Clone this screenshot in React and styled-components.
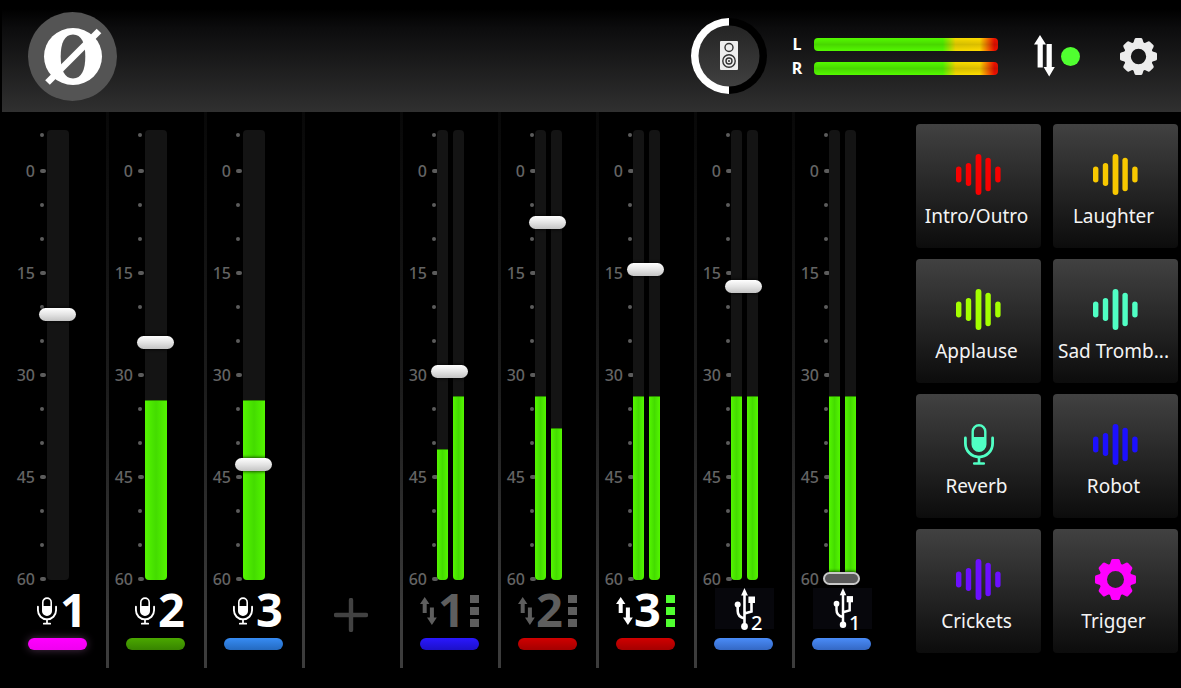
import React from "react";
import styled, { createGlobalStyle } from "styled-components";

const GlobalStyle = createGlobalStyle`
    * {
        box-sizing: border-box;
    }
    body {
        margin: 0;
        background: #000;
        color: #fff;
        font-family: "Noto Sans", "Open Sans", sans-serif;
    }
    button {
        font: inherit;
        color: inherit;
        border: 0;
        padding: 0;
        background: none;
        cursor: pointer;
    }
    svg {
        display: block;
    }
`

const Header = styled.header`
    display: flex;
    align-items: center;
    height: 112px;
    margin-left: 2px;
    padding: 0 24px 0 26px;
    background: linear-gradient(#000 8%, #0c0c0d 25%, #303030);
`

const Logo = styled.button`
    margin-right: auto;
`

const Output = styled.button`
    margin-right: 24px;
`

const Levels = styled.div`
    display: grid;
    grid-template-columns: 12px 184px;
    column-gap: 11px;
    row-gap: 11px;
    align-items: center;
    margin-right: 36px;
`

const LevelName = styled.span`
    font-size: 16px;
    font-weight: 700;
    line-height: 13px;
    text-align: center;
`

const Level = styled.div`
    height: 13px;
    border-radius: 4px;
    background:
        linear-gradient(transparent, rgba(0, 0, 0, 0.14) 50%, transparent),
        linear-gradient(90deg, #54fa00 70%, #f5dc00 77%, #ffdc00 90%, #f01000 98%);
`

const Status = styled.div`
    display: flex;
    align-items: center;
    gap: 6px;
    margin-right: 40px;
`

const Led = styled.span`
    width: 19px;
    height: 19px;
    border-radius: 50%;
    background: #50ff30;
`

const SettingsButton = styled.button`
    color: #ececec;
`

const Main = styled.main`
    display: flex;
    align-items: flex-start;
    gap: 22px;
    padding: 0 3px 0 12px;
`

const Mixer = styled.section`
    flex: 1;
    display: grid;
    grid-template-columns: repeat(9, minmax(0, 1fr));
`

const Channel = styled.div`
    padding: 4px 0 18px;
    background: ${({ $last }) => $last ? "none" : "linear-gradient(#080808, #1c1c1c 50%, #3c3c3c 92%) right 1px top / 3px 100% no-repeat"};
`

const FaderArea = styled.div`
    display: flex;
    height: 472px;
`

const Scale = styled.div`
    width: ${({ $stereo }) => $stereo ? "33px" : "35px"};
    color: #646464;
`

const Tick = styled.div`
    display: flex;
    align-items: center;
    justify-content: flex-end;
    gap: 5px;
    width: 34px;
    height: ${({ $first }) => $first ? "38px" : "34px"};
    font-size: 16px;
    font-weight: 500;
    line-height: 20px;
`

const Mark = styled.span`
    width: 6px;

    &::before {
        content: "";
        display: block;
        width: ${({ $major }) => $major ? "6px" : "4px"};
        height: 4px;
        border-radius: 2px;
        background: #5c5c5c;
    }
`

const Tracks = styled.div`
    position: relative;
    display: flex;
    gap: 5px;
    height: 450px;
    margin-top: 14px;
`

const Track = styled.div`
    display: flex;
    align-items: flex-end;
    width: ${({ $stereo }) => $stereo ? "11px" : "22px"};
    border-radius: 4px;
    background: #141414;
    overflow: hidden;
`

const Fill = styled.div`
    width: 100%;
    border-top: 1px solid #2c8a00;
    background: linear-gradient(90deg, #54f600, #44dc00 50%, #54f600);
`

const Fader = styled.input`
    position: absolute;
    top: -6px;
    left: ${({ $stereo }) => $stereo ? "-6px" : "-8px"};
    width: 37px;
    height: 461px;
    margin: 0;
    appearance: none;
    background: transparent;
    writing-mode: vertical-lr;
    direction: rtl;

    &::-webkit-slider-thumb {
        appearance: none;
        width: 37px;
        height: 13px;
        border-radius: 7px;
        border: ${({ $muted }) => $muted ? "2px solid #c8c8c8" : "0"};
        background: ${({ $muted }) => $muted ? "#5a5a5a" : "linear-gradient(#fff, #e4e4e4 50%, #c4c4c4)"};
        box-shadow: 0 0 3px 1px rgba(0, 0, 0, 0.6);
    }
`

const Source = styled.div`
    display: flex;
    align-items: center;
    justify-content: ${({ $spread }) => $spread ? "space-between" : "flex-end"};
    gap: ${({ $spread }) => $spread ? "0" : "3px"};
    width: 59px;
    height: 46px;
    margin-left: 16px;
    color: ${({ $off }) => $off ? "#5e5e5e" : "#fff"};
`

const Number = styled.span`
    padding-bottom: 5px;
    font-size: 47px;
    font-weight: 700;
    line-height: 40px;
`

const Slots = styled.span`
    display: grid;
    gap: 4px;
    margin-left: 4px;
    color: ${({ $color }) => $color};

    i {
        width: 9px;
        height: 8px;
        background: currentColor;
    }
`

const Usb = styled.div`
    position: relative;
    display: flex;
    justify-content: center;
    width: 59px;
    height: 46px;
    margin-left: 17px;
    background: linear-gradient(#07070c 41px, transparent 41px);
`

const UsbNumber = styled.span`
    position: absolute;
    left: 36px;
    top: 25px;
    font-size: 20px;
    font-weight: 500;
    line-height: 20px;
`

const Strip = styled.div`
    width: 59px;
    height: 12px;
    margin: 4px 0 0 16px;
    border-radius: 6px;
    background: linear-gradient(${({ $from, $to }) => `${$from}, ${$to}`});
    box-shadow: ${({ $glow }) => $glow ? "0 0 8px rgba(255, 160, 255, 0.3)" : "none"};
`

const AddButton = styled.button`
    display: block;
    margin: 482px auto 0 28px;
`

const Pads = styled.section`
    display: grid;
    grid-template-columns: 125px 125px;
    gap: 11px 12px;
    padding-top: 12px;
`

const Pad = styled.button`
    display: flex;
    flex-direction: column;
    align-items: center;
    gap: 9px;
    height: 124px;
    padding-top: 30px;
    border-radius: 4px;
    background: linear-gradient(#414141, #0c0c0c);
`

const PadLabel = styled.span`
    padding-right: 4px;
    color: #f4f4f4;
    font-size: 19px;
    line-height: 24px;
    white-space: nowrap;
`

const PadIcon = styled.span`
    color: ${({ $color }) => $color};
`

const LogoIcon = () => (
    <svg width="89" height="89" viewBox="0 0 89 89">
        <circle cx="44.5" cy="44.5" r="44.5" fill="#545454" />
        <ellipse cx="45" cy="44.5" rx="29" ry="28.5" fill="#fff" />
        <path d="M45 22.5C53.5 22.5 57.3 31 57.3 44.5S53.5 66.5 45 66.5 32.7 58 32.7 44.5 36.5 22.5 45 22.5z" fill="#545454" />
        <path d="M19.5 70.5 71 19" stroke="#fff" strokeWidth="6.6" />
    </svg>
)

const SpeakerDial = () => (
    <svg width="76" height="76" viewBox="0 0 76 76">
        <defs>
            <linearGradient id="dial" x1="0" y1="0" x2="0" y2="1">
                <stop offset="0" stopColor="#242424" />
                <stop offset="1" stopColor="#404040" />
            </linearGradient>
        </defs>
        <circle cx="38" cy="38" r="38" fill="#000" />
        <path d="M38 0a38 38 0 0 0 0 76z" fill="#fff" />
        <circle cx="38" cy="38" r="30.5" fill="url(#dial)" />
        <rect x="29" y="23" width="18" height="29" rx="1" fill="#eee" />
        <g fill="none" stroke="#333">
            <circle cx="38" cy="29.5" r="4" strokeWidth="1.4" />
            <circle cx="38" cy="43" r="6.2" strokeWidth="1.4" />
            <circle cx="38" cy="43" r="3" strokeWidth="1.4" />
        </g>
        <circle cx="38" cy="43" r="1" fill="#333" />
    </svg>
)

const TransferIcon = () => (
    <svg width="21" height="42" viewBox="0 0 21 42" fill="#fff">
        <path d="M6 0 12 9.5H8.8V32.5H3.6V9.5H0z" />
        <path d="M12.6 9H17.8V32H20.8L15.2 41.5 9.6 32H12.6z" />
    </svg>
)

const GearIcon = ({ size }) => (
    <svg width={size} height={size} viewBox="0 0 40 40" fill="currentColor">
        <circle cx="20" cy="20" r="12.1" fill="none" stroke="currentColor" strokeWidth="7.6" />
        {[0, 45, 90, 135, 180, 225, 270, 315].map(angle => (
            <path
                key={angle}
                d="M12.5 8.5 14.6 4.8 15.8 1.2Q16.2 0 17.4 0H22.6Q23.8 0 24.2 1.2L25.4 4.8 27.5 8.5z"
                transform={`rotate(${angle} 20 20)`}
            />
        ))}
    </svg>
)

const MicIcon = ({ width = 30, height = 41 }) => (
    <svg width={width} height={height} viewBox="0 0 30 41" fill="none" stroke="currentColor">
        <rect x="8.7" y="1.2" width="12.6" height="25.6" rx="6.3" strokeWidth="2.4" />
        <path d="M8.5 13H21.5V20.5A6.5 6.5 0 0 1 8.5 20.5z" fill="currentColor" stroke="none" />
        <path d="M1.4 14V19.5A13.6 13.6 0 0 0 28.6 19.5V14" strokeWidth="2.8" strokeLinecap="round" />
        <path d="M15 33V39M10.2 39.5H19.8" strokeWidth="2.6" strokeLinecap="round" />
    </svg>
)

const WaveIcon = () => (
    <svg width="45" height="41" viewBox="0 0 45 41" fill="currentColor">
        <rect x="0" y="12.5" width="5.4" height="16" rx="2.7" />
        <rect x="9.8" y="9" width="5.4" height="23" rx="2.7" />
        <rect x="19.6" y="0" width="5.8" height="41" rx="2.9" />
        <rect x="29.4" y="3.7" width="5.4" height="33.6" rx="2.7" />
        <rect x="39.2" y="12.5" width="5.4" height="16" rx="2.7" />
    </svg>
)

const SwapIcon = () => (
    <svg width="17" height="28" viewBox="0 0 17 28" fill="currentColor">
        <path d="M4.7 0 9.4 7H6.7V16H2.7V7H0z" />
        <path d="M9.9 10.5H13.9V20.5H16.8L11.9 28 7 20.5H9.9z" />
    </svg>
)

const UsbIcon = ({ size }) => (
    <svg width={size / 2} height={size} viewBox="0 0 21 42" fill="none" stroke="#fff" strokeWidth="2.6">
        <path d="M10.5 6V38M10.5 30.5C6 29.5 3.7 27.5 3.7 23V17M10.5 25.5 17.5 23.5V14" />
        <path d="M10.5 0 13.9 7.5H7.1z" fill="#fff" stroke="none" />
        <circle cx="3.7" cy="16.5" r="3" fill="#fff" stroke="none" />
        <path d="M14.4 8.5H21V15H14.4z" fill="#fff" stroke="none" />
        <circle cx="10.5" cy="38.5" r="3.4" fill="#fff" stroke="none" />
    </svg>
)

const PlusIcon = () => (
    <svg width="34" height="34" viewBox="0 0 34 34">
        <path d="M17 2V32M2 17H32" stroke="#424242" strokeWidth="4.4" strokeLinecap="round" />
    </svg>
)

// levels are fill heights in px, gain is in dB
const channels = [
    { id: "mic1", type: "mic", number: 1, gain: -21.1, levels: [0], from: "#ff00ff", to: "#f000f0", glow: true },
    { id: "mic2", type: "mic", number: 2, gain: -25.2, levels: [180], from: "#4ba800", to: "#378400" },
    { id: "mic3", type: "mic", number: 3, gain: -43.2, levels: [180], from: "#378cf4", to: "#246ac0" },
    { id: "add", type: "add" },
    { id: "call1", type: "call", number: 1, gain: -29.5, levels: [131, 184], off: true, from: "#2a18ff", to: "#1c10c8" },
    { id: "call2", type: "call", number: 2, gain: -7.6, levels: [184, 152], off: true, from: "#d00000", to: "#a40000" },
    { id: "call3", type: "call", number: 3, gain: -14.5, levels: [184, 184], from: "#d00000", to: "#a40000" },
    { id: "usb2", type: "usb", number: 2, iconSize: 42, gain: -17, levels: [184, 184], from: "#4a8cf8", to: "#3468c4" },
    { id: "usb1", type: "usb", number: 1, iconSize: 40, gain: -60, levels: [184, 184], muted: true, from: "#4a8cf8", to: "#3468c4" },
]

const ticks = ["", "0", "", "", "15", "", "", "30", "", "", "45", "", "", "60"]

const pads = [
    { label: "Intro/Outro", color: "#f80000", icon: <WaveIcon /> },
    { label: "Laughter", color: "#f8c800", icon: <WaveIcon /> },
    { label: "Applause", color: "#a4ff00", icon: <WaveIcon /> },
    { label: "Sad Tromb...", color: "#50ffc4", icon: <WaveIcon /> },
    { label: "Reverb", color: "#50ffc4", icon: <MicIcon /> },
    { label: "Robot", color: "#1c10ff", icon: <WaveIcon /> },
    { label: "Crickets", color: "#6c10ff", icon: <WaveIcon /> },
    { label: "Trigger", color: "#ff00ff", icon: <GearIcon size={41} /> },
]

const ChannelSource = ({ type, number, off, iconSize }) => {
    if (type === "usb") {
        return (
            <Usb>
                <UsbIcon size={iconSize} />
                <UsbNumber>{number}</UsbNumber>
            </Usb>
        )
    }
    if (type === "call") {
        return (
            <Source $off={off} $spread>
                <SwapIcon />
                <Number>{number}</Number>
                <Slots $color={off ? "#5e5e5e" : "#50ff30"}>
                    <i /><i /><i />
                </Slots>
            </Source>
        )
    }
    return (
        <Source>
            <MicIcon width={20} height={28} />
            <Number>{number}</Number>
        </Source>
    )
}

const MixerChannel = ({ channel, last }) => {
    const stereo = channel.levels.length > 1

    return (
        <Channel $last={last}>
            <FaderArea>
                <Scale $stereo={stereo}>
                    {ticks.map((tick, i) => (
                        <Tick key={i} $first={i === 0}>
                            {tick}
                            <Mark $major={tick !== ""} />
                        </Tick>
                    ))}
                </Scale>
                <Tracks>
                    {channel.levels.map((level, i) => (
                        <Track key={i} $stereo={stereo}>
                            {level > 0 && <Fill style={{ height: level }} />}
                        </Track>
                    ))}
                    <Fader
                        type="range"
                        min="-60"
                        max="6"
                        step="0.1"
                        defaultValue={channel.gain}
                        aria-label={channel.id}
                        $muted={channel.muted}
                        $stereo={stereo}
                    />
                </Tracks>
            </FaderArea>
            <ChannelSource
                type={channel.type}
                number={channel.number}
                off={channel.off}
                iconSize={channel.iconSize}
            />
            <Strip $from={channel.from} $to={channel.to} $glow={channel.glow} />
        </Channel>
    )
}

const App = () => {
    return (
        <>
            <GlobalStyle />
            <Header>
                <Logo aria-label="Home"><LogoIcon /></Logo>
                <Output aria-label="Speaker volume"><SpeakerDial /></Output>
                <Levels>
                    <LevelName>L</LevelName>
                    <Level />
                    <LevelName>R</LevelName>
                    <Level />
                </Levels>
                <Status>
                    <TransferIcon />
                    <Led />
                </Status>
                <SettingsButton aria-label="Settings"><GearIcon size={37} /></SettingsButton>
            </Header>
            <Main>
                <Mixer>
                    {channels.map((channel, i) => channel.type === "add" ? (
                        <Channel key={channel.id}>
                            <AddButton aria-label="Add channel"><PlusIcon /></AddButton>
                        </Channel>
                    ) : (
                        <MixerChannel key={channel.id} channel={channel} last={i === channels.length - 1} />
                    ))}
                </Mixer>
                <Pads>
                    {pads.map(pad => (
                        <Pad key={pad.label}>
                            <PadIcon $color={pad.color}>{pad.icon}</PadIcon>
                            <PadLabel>{pad.label}</PadLabel>
                        </Pad>
                    ))}
                </Pads>
            </Main>
        </>
    )
}

export default App
